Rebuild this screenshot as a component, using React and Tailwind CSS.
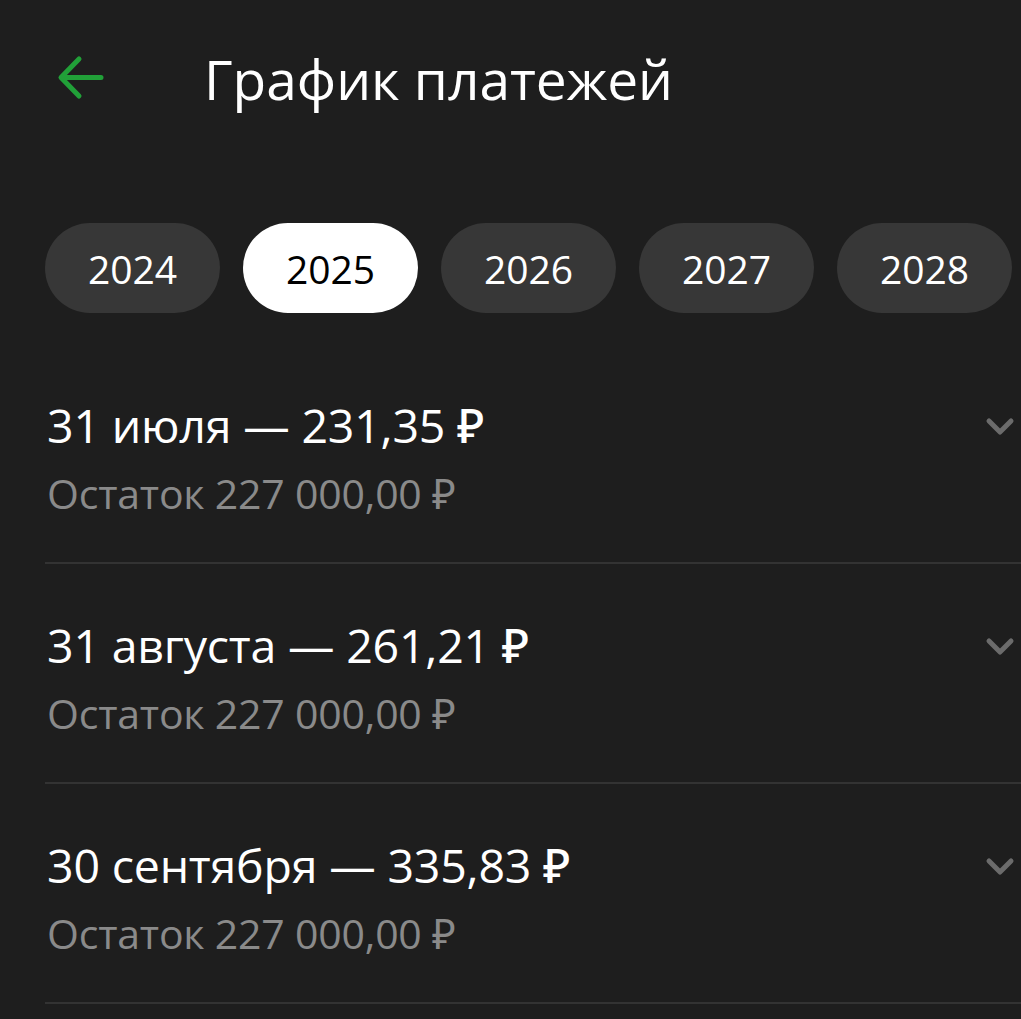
import React, { useState } from "react";

const years = ["2024", "2025", "2026", "2027", "2028"];

const payments = [
    { date: "31 июля", amount: "231,35 ₽", rest: "227 000,00 ₽" },
    { date: "31 августа", amount: "261,21 ₽", rest: "227 000,00 ₽" },
    { date: "30 сентября", amount: "335,83 ₽", rest: "227 000,00 ₽" },
];

const BackArrow = () => (
    <svg width="48" height="48" viewBox="0 0 48 48" fill="none">
        <path d="M45 23.5H6M23 5L5 23.5L23 42" stroke="#21a038" strokeWidth="5" strokeLinecap="round" strokeLinejoin="round" />
    </svg>
);

const Chevron = () => (
    <svg width="30" height="20" viewBox="0 0 30 20" fill="none">
        <path d="M4 4L15 15L26 4" stroke="#6b6b6b" strokeWidth="5" strokeLinecap="round" strokeLinejoin="round" />
    </svg>
);

export default function App() {
    const [year, setYear] = useState("2025");

    return (
        <div className="min-h-screen bg-[#1e1e1e] text-white overflow-hidden" style={{ fontFamily: '"Open Sans", "Noto Sans", sans-serif' }}>
            {/* header */}
            <div className="h-[156px] flex items-center pl-[56px]">
                <BackArrow />
                <h1 className="ml-[100px] text-[55px] leading-none tracking-[0px]">График платежей</h1>
            </div>

            {/* years */}
            <div className="mt-[67px] flex gap-[23px] pl-[45px]">
                {years.map((y) => (
                    <button
                        key={y}
                        onClick={() => setYear(y)}
                        className={`shrink-0 w-[175px] h-[90px] rounded-full text-[39px] leading-none ${
                            y === year ? "bg-white text-black" : "bg-[#373737] text-white"
                        }`}
                    >
                        {y}
                    </button>
                ))}
            </div>

            {/* payments */}
            <div className="mt-[31px] ml-[45px]">
                {payments.map((p, i) => (
                    <div key={i} className="h-[220px] border-b-2 border-[#333333] flex justify-between pt-[55px] pr-[6px]">
                        <div className="pl-[2px]">
                            <div className="text-[46.5px] leading-[52px] font-medium tracking-[-0.2px]">
                                {p.date} — {p.amount}
                            </div>
                            <div className="mt-[18px] text-[41px] leading-[48px] text-[#8a8a8a] tracking-[-0.2px]">Остаток {p.rest}</div>
                        </div>
                        <div className="pt-[18px]">
                            <Chevron />
                        </div>
                    </div>
                ))}
            </div>
        </div>
    );
}
